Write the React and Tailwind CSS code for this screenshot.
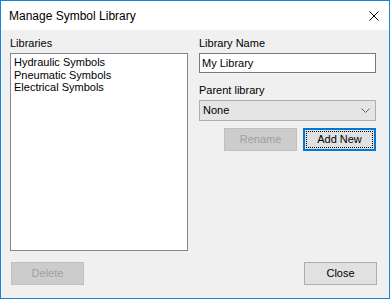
import React from 'react';

const libraries = ['Hydraulic Symbols', 'Pneumatic Symbols', 'Electrical Symbols'];

const font = { fontFamily: '"Liberation Sans", Arial, sans-serif' };

const App = () => {
  return (
    <div
      className="w-[390px] h-[299px] border border-[#1883d7] bg-[#f0f0f0] flex flex-col text-[11px] text-black"
      style={font}
    >
      {/* Title bar */}
      <div className="h-[29px] bg-white flex items-center justify-between pl-[8px] pr-[9px]">
        <span className="text-[12px]">Manage Symbol Library</span>
        <svg width="10" height="10" viewBox="0 0 10 10" className="mr-[1px]">
          <path d="M0.5 0.5 L9.5 9.5 M9.5 0.5 L0.5 9.5" stroke="#000" strokeWidth="1" />
        </svg>
      </div>

      {/* Body */}
      <div className="flex-1 flex flex-col pl-[9px] pr-[12px] pt-[7px]">
        <div className="flex gap-[11px]">
          {/* Left column */}
          <div className="w-[178px] flex flex-col">
            <label className="leading-[13px] mb-[3px]">Libraries</label>
            <div className="h-[198px] bg-white border border-[#828790] pt-[2px] pl-[3px]">
              {libraries.map((lib) => (
                <div key={lib} className="leading-[12.5px]">
                  {lib}
                </div>
              ))}
            </div>
          </div>

          {/* Right column */}
          <div className="w-[177px] flex flex-col">
            <label className="leading-[13px] mb-[3px]">Library Name</label>
            <div className="h-[20px] bg-white border border-[#7a7a7a] flex items-center pl-[2px]">
              My Library
            </div>
            <label className="leading-[13px] mt-[11px] mb-[3px]">Parent library</label>
            <div className="h-[21px] bg-[#e5e5e5] border border-[#adadad] flex items-center justify-between pl-[3px] pr-[5px]">
              <span>None</span>
              <svg width="9" height="5" viewBox="0 0 9 5">
                <path d="M0.5 0.5 L4.5 4.5 L8.5 0.5" fill="none" stroke="#606060" strokeWidth="1" />
              </svg>
            </div>
            <div className="flex justify-end gap-[6px] mt-[7px]">
              <button className="w-[73px] h-[23px] bg-[#cccccc] border border-[#bfbfbf] text-[#a0a0a0]">
                Rename
              </button>
              <button className="w-[73px] h-[23px] bg-[#e1e1e1] border-2 border-[#0078d7] p-[1px]">
                <span className="w-full h-full flex items-center justify-center border border-dotted border-black">
                  Add New
                </span>
              </button>
            </div>
          </div>
        </div>

        {/* Bottom buttons */}
        <div className="flex justify-between mt-[11px] pl-[1px]">
          <button className="w-[73px] h-[23px] bg-[#cccccc] border border-[#bfbfbf] text-[#a0a0a0]">
            Delete
          </button>
          <button className="w-[73px] h-[23px] bg-[#e1e1e1] border border-[#adadad]">
            Close
          </button>
        </div>
      </div>
    </div>
  );
};

export default App;
